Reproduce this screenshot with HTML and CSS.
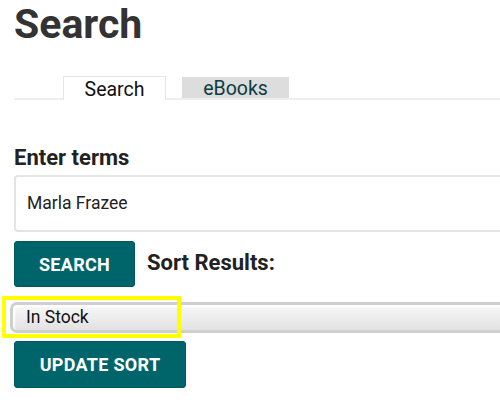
FILE: index.html
```html
<!DOCTYPE html>
<html>
<head>
<meta charset="utf-8">
<link rel="stylesheet" href="styles.css">
</head>
<body>
<div class="page">
  <h1 class="title">Search</h1>
  <div class="tabs">
    <div class="tab-gap"></div>
    <div class="tab active">Search</div>
    <div class="tab-space"></div>
    <div class="tab inactive">eBooks</div>
    <div class="tab-rest"></div>
  </div>
  <label class="label">Enter terms</label>
  <div class="input">Marla Frazee</div>
  <div class="row">
    <button class="btn btn-search">SEARCH</button>
    <span class="label sort-label">Sort Results:</span>
  </div>
  <div class="select-wrap">
    <div class="select">In Stock</div>
    <div class="highlight"></div>
  </div>
  <button class="btn btn-update">UPDATE SORT</button>
</div>
</body>
</html>
```
FILE: styles.css
```css
html, body {
  margin: 0;
  padding: 0;
  background: #fff;
  overflow: hidden;
}
body {
  font-family: Roboto, "Liberation Sans", sans-serif;
  color: #222;
}
.page {
  padding: 0 0 0 14px;
  width: 600px;
}
.title {
  margin: 0;
  font-size: 41px;
  font-weight: 700;
  color: #333;
  line-height: 48px;
  height: 48px;
}
.tabs {
  display: flex;
  align-items: flex-end;
  margin-top: 28px;
  height: 24px;
}
.tab-gap {
  width: 49px;
  border-bottom: 2px solid #eee;
  align-self: stretch;
}
.tab {
  height: 24px;
  box-sizing: border-box;
  font-size: 19.5px;
  line-height: 24px;
  text-align: center;
}
.tab.active {
  width: 103px;
  border: 1px solid #e6e6e6;
  border-bottom: none;
  color: #111;
  background: #fff;
  padding-top: 1px;
}
.tab-space {
  width: 16px;
  align-self: stretch;
  border-bottom: 2px solid #eee;
}
.tab.inactive {
  width: 107px;
  height: 23px;
  line-height: 22px;
  background: #dddddd;
  color: #0d3c40;
  border-bottom: 2px solid #eee;
  padding-top: 1px;
}
.tab-rest {
  flex: 1;
  align-self: stretch;
  border-bottom: 2px solid #eee;
}
.label {
  display: block;
  font-size: 22px;
  font-weight: 700;
  color: #222;
  margin-top: 44px;
  line-height: 28px;
}
.input {
  margin-top: 3px;
  height: 57px;
  box-sizing: border-box;
  border: 2px solid #e4e4e4;
  border-radius: 4px;
  padding-left: 11px;
  font-size: 17.5px;
  line-height: 53px;
  color: #222;
  width: 560px;
}
.row {
  display: flex;
  align-items: center;
  margin-top: 9px;
  gap: 12px;
}
.btn {
  font-family: Roboto, "Liberation Sans", sans-serif;
  background: #00656b;
  color: #fff;
  border: 1px solid #00595e;
  border-radius: 3px;
  font-weight: 700;
  font-size: 18px;
  letter-spacing: 0.3px;
  padding: 0;
  display: block;
}
.btn-search {
  width: 121px;
  height: 46px;
}
.sort-label {
  margin-top: 0;
  position: relative;
  top: -1px;
}
.select-wrap {
  position: relative;
  margin-top: 15px;
  margin-left: -4px;
  height: 31px;
}
.select {
  height: 31px;
  box-sizing: border-box;
  width: 600px;
  border: 3px solid #cfcfcf;
  border-radius: 7px;
  background: linear-gradient(#f8f8f8, #ececec 55%, #e2e2e2);
  box-shadow: inset 2px 2px 2px #fff;
  font-size: 17.5px;
  line-height: 25px;
  padding-left: 13px;
  color: #111;
}
.highlight {
  position: absolute;
  left: -8px;
  top: -6px;
  width: 179px;
  height: 42px;
  box-sizing: border-box;
  border: 4px solid #ffff00;
}
.btn-update {
  margin-top: 8px;
  width: 172px;
  height: 47px;
}
```
